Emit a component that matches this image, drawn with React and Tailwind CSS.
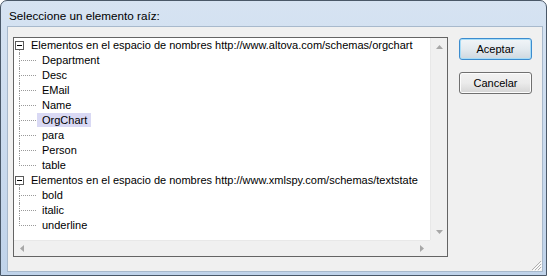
import React from 'react';

const groups = [
  {
    label: 'Elementos en el espacio de nombres http://www.altova.com/schemas/orgchart',
    items: ['Department', 'Desc', 'EMail', 'Name', 'OrgChart', 'para', 'Person', 'table'],
  },
  {
    label: 'Elementos en el espacio de nombres http://www.xmlspy.com/schemas/textstate',
    items: ['bold', 'italic', 'underline'],
  },
];

const Arrow = ({ dir }) => {
  const pts = {
    up: '0,4 3.5,0 7,4',
    down: '0,0 3.5,4 7,0',
    left: '4,0 0,3.5 4,7',
    right: '0,0 4,3.5 0,7',
  }[dir];
  const vertical = dir === 'up' || dir === 'down';
  return (
    <svg width={vertical ? 7 : 4} height={vertical ? 4 : 7}>
      <polygon points={pts} fill="#a7a7a7" />
    </svg>
  );
};

const ChildRow = ({ label, last, selected }) => (
  <div className="flex h-[15px]">
    <div className="w-[5px] shrink-0" />
    <div className="flex w-[17px] shrink-0 flex-col">
      <div className="h-[8px] border-b border-l border-dotted border-[#9a9a9a]" />
      <div className={last ? 'flex-1' : 'flex-1 border-l border-dotted border-[#9a9a9a]'} />
    </div>
    <span
      className={`ml-[1px] h-[14px] pl-[5px] pr-[4px] leading-[15px] ${selected ? 'bg-[#d9d9f4]' : ''}`}
    >
      {label}
    </span>
  </div>
);

const RootRow = ({ label }) => (
  <div className="flex h-[15px]">
    <div className="ml-[1px] flex w-[9px] shrink-0 flex-col">
      <div className="h-[3px]" />
      <div className="flex h-[9px] w-[9px] items-center justify-center border border-[#5a5a5a] bg-white">
        <div className="h-[1px] w-[5px] bg-black" />
      </div>
      <div className="ml-[4px] flex-1 border-l border-dotted border-[#9a9a9a]" />
    </div>
    <span className="ml-[7px] leading-[15px] whitespace-nowrap">{label}</span>
  </div>
);

const Button = ({ children, isDefault }) => (
  <button
    className={`flex h-[22px] w-[73px] items-center justify-center rounded-[3px] border text-[11px] text-black ${
      isDefault
        ? 'border-[#3c8ccf] bg-gradient-to-b from-[#f1f5f8] via-[#e3eaef] to-[#cfd8df] shadow-[inset_0_0_0_1px_#a6dcf7]'
        : 'border-[#707070] bg-gradient-to-b from-[#f2f2f2] via-[#ebebeb] to-[#d5d5d5] shadow-[inset_0_0_0_1px_#fcfcfc]'
    }`}
  >
    {children}
  </button>
);

export default function App() {
  return (
    <div
      className="relative flex h-[276px] w-[547px] flex-col overflow-hidden rounded-t-[7px] border border-[#4a5868] bg-gradient-to-b from-[#d6e3f2] to-[#c0d3ea]"
      style={{ fontFamily: '"Liberation Sans", Arial, sans-serif' }}
    >
      <div className="flex h-[25px] shrink-0 items-center pl-[8px] pt-[4px] text-[11.7px] text-black">
        Seleccione un elemento raíz:
      </div>
      <div className="mb-[3px] ml-[6px] mr-[3px] flex flex-1 border border-[#a8b9cc] bg-[#f0f0f0] pl-[5px] pt-[10px]">
        <div className="flex h-[220px] w-[435px] shrink-0 flex-col border border-[#646464] bg-white text-[11px] text-black">
          <div className="flex flex-1">
            <div className="flex-1 overflow-hidden">
              {groups.map((g) => (
                <div key={g.label}>
                  <RootRow label={g.label} />
                  {g.items.map((it, i) => (
                    <ChildRow
                      key={it}
                      label={it}
                      last={i === g.items.length - 1}
                      selected={it === 'OrgChart'}
                    />
                  ))}
                </div>
              ))}
            </div>
            <div className="flex w-[17px] shrink-0 flex-col justify-between border-l border-[#e8e8e8] bg-[#f0f0f0]">
              <div className="flex h-[17px] items-center justify-center">
                <Arrow dir="up" />
              </div>
              <div className="flex h-[17px] items-center justify-center">
                <Arrow dir="down" />
              </div>
            </div>
          </div>
          <div className="flex h-[16px] shrink-0">
            <div className="flex flex-1 items-center justify-between border-t border-[#e8e8e8] bg-[#f0f0f0] px-[6px]">
              <Arrow dir="left" />
              <Arrow dir="right" />
            </div>
            <div className="w-[17px] shrink-0 bg-[#f0f0f0]" />
          </div>
        </div>
        <div className="ml-[11px] flex flex-col gap-[12px] pt-[1px]">
          <Button isDefault>Aceptar</Button>
          <Button>Cancelar</Button>
        </div>
      </div>
      <svg className="absolute bottom-[4px] right-[4px]" width="12" height="12">
        <path d="M11 2 L2 11 M11 5 L5 11 M11 8 L8 11" stroke="#b0b0b0" strokeWidth="1" />
        <path d="M12 3 L3 12 M12 6 L6 12 M12 9 L9 12" stroke="#ffffff" strokeWidth="1" />
      </svg>
    </div>
  );
}
